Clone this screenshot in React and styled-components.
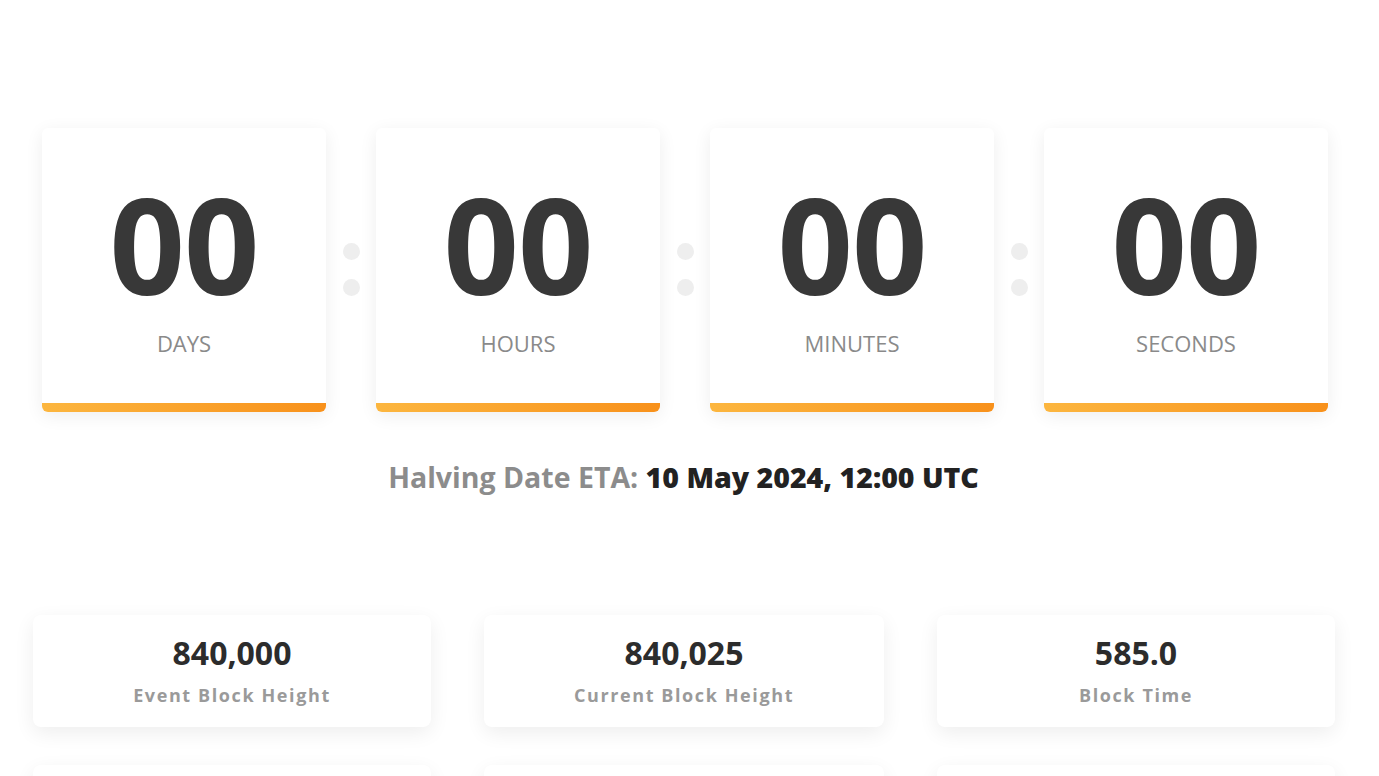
import React from 'react'
import styled, { createGlobalStyle } from 'styled-components'

const GlobalStyle = createGlobalStyle`
  html, body {
    margin: 0;
    padding: 0;
    background: #fff;
    font-family: "Open Sans", "Noto Sans", Arial, sans-serif;
    overflow: hidden;
  }
`

// styled
const StyledPage = styled.main`
  width: 1379px;
  height: 776px;
  overflow: hidden;
  padding-top: 128px;
  box-sizing: border-box;
`

const StyledCountdown = styled.div`
  display: flex;
  align-items: flex-start;
  padding-left: 42px;
`

const StyledTimeCard = styled.div`
  display: flex;
  flex-direction: column;
  align-items: center;
  width: 284px;
  height: 284px;
  box-sizing: border-box;
  background: #fff;
  border-radius: 6px;
  box-shadow: 0 4px 18px rgba(0, 0, 0, 0.07);
  position: relative;
  .value {
    margin-top: 62px;
    font-size: 132px;
    line-height: 108px;
    font-weight: 700;
    color: #383838;
    letter-spacing: -1px;
  }
  .label {
    margin-top: 30px;
    font-size: 22px;
    line-height: 30px;
    color: #8a8a8a;
    text-transform: uppercase;
  }
`

const StyledBar = styled.div`
  position: absolute;
  left: 0;
  right: 0;
  bottom: 0;
  height: 9px;
  border-radius: 0 0 6px 6px;
  background: linear-gradient(90deg, #fcb63f, #f8911b);
`

const StyledColon = styled.div`
  display: flex;
  flex-direction: column;
  align-items: center;
  gap: 19px;
  width: 50px;
  padding-top: 115px;
  span {
    width: 17px;
    height: 17px;
    border-radius: 50%;
    background: #eeeeee;
  }
`

const StyledEta = styled.p`
  margin: 46px 0 0;
  text-align: center;
  padding-right: 12px;
  font-size: 28.5px;
  font-weight: 700;
  color: #8c8c8c;
  b {
    color: #222;
  }
`

const StyledStats = styled.div`
  display: grid;
  grid-template-columns: 398px 400px 398px;
  column-gap: 53px;
  row-gap: 38px;
  padding-left: 33px;
  margin-top: 119px;
`

const StyledStatCard = styled.div`
  display: flex;
  flex-direction: column;
  align-items: center;
  height: 112px;
  box-sizing: border-box;
  padding-top: 18px;
  background: #fff;
  border-radius: 8px;
  box-shadow: 0 6px 20px rgba(0, 0, 0, 0.07);
  .value {
    font-size: 32px;
    line-height: 40px;
    font-weight: 700;
    color: #2c2c2c;
  }
  .label {
    margin-top: 10px;
    font-size: 18px;
    line-height: 24px;
    font-weight: 700;
    letter-spacing: 1.6px;
    color: #9a9a9a;
  }
`

const units = ['Days', 'Hours', 'Minutes', 'Seconds']

const stats = [
  { value: '840,000', label: 'Event Block Height' },
  { value: '840,025', label: 'Current Block Height' },
  { value: '585.0', label: 'Block Time' },
  { value: '', label: '' },
  { value: '', label: '' },
  { value: '', label: '' },
]

// markup
const App = () => {
  return (
    <StyledPage>
      <GlobalStyle />
      <StyledCountdown>
        {units.map((unit, i) => (
          <React.Fragment key={unit}>
            {i > 0 && (
              <StyledColon>
                <span />
                <span />
              </StyledColon>
            )}
            <StyledTimeCard>
              <div className="value">00</div>
              <div className="label">{unit}</div>
              <StyledBar />
            </StyledTimeCard>
          </React.Fragment>
        ))}
      </StyledCountdown>
      <StyledEta>
        Halving Date ETA: <b>10 May 2024, 12:00 UTC</b>
      </StyledEta>
      <StyledStats>
        {stats.map((s, i) => (
          <StyledStatCard key={i}>
            <div className="value">{s.value}</div>
            <div className="label">{s.label}</div>
          </StyledStatCard>
        ))}
      </StyledStats>
    </StyledPage>
  )
}

export default App
